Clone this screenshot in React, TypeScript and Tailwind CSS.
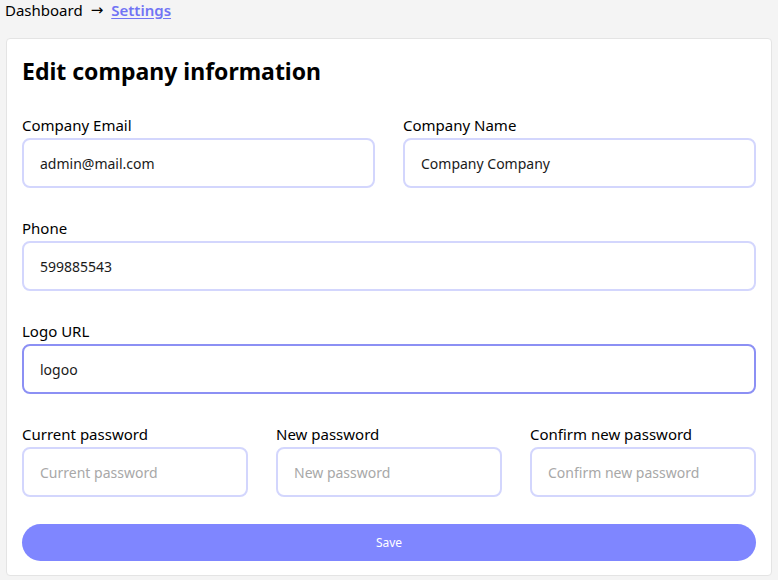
import React from "react";

const font = { fontFamily: '"Noto Sans", "Segoe UI", sans-serif' };

function Field({ label, value, placeholder, focused }: { label: string; value?: string; placeholder?: string; focused?: boolean }) {
  return (
    <div className="flex flex-col">
      <label className="text-[15px] leading-5 text-black mb-[3px]">{label}</label>
      <input
        readOnly
        defaultValue={value}
        placeholder={placeholder}
        className={
          "h-[50px] w-full rounded-lg border-2 bg-white px-4 text-[14px] text-[#1a1a1a] outline-none placeholder:text-[#a8a8a8] " +
          (focused ? "border-[#8c90f4]" : "border-[#d3d6fd]")
        }
        style={font}
      />
    </div>
  );
}

export default function App() {
  return (
    <div className="min-h-[580px] bg-[#f4f4f4] px-[6px]" style={font}>
      <div className="flex items-center h-[20px] text-[15px] leading-5 text-black -ml-[1px]">
        <span>Dashboard</span>
        <span className="mx-[8px] text-[15px]" style={{ fontFamily: '"DejaVu Sans", sans-serif' }}>→</span>
        <a className="font-semibold text-[#7174f4] underline underline-offset-2">Settings</a>
      </div>
      <div className="mt-[18px] rounded border border-[#e4e4e4] bg-white px-[15px] pt-4 pb-[14px]">
        <h1 className="text-[23px] leading-8 font-bold text-black">Edit company information</h1>
        <div className="mt-[28px] flex flex-col gap-[30px]">
          <div className="grid grid-cols-2 gap-7">
            <Field label="Company Email" value="admin@mail.com" />
            <Field label="Company Name" value="Company Company" />
          </div>
          <Field label="Phone" value="599885543" />
          <Field label="Logo URL" value="logoo" focused />
          <div className="grid grid-cols-3 gap-7">
            <Field label="Current password" placeholder="Current password" />
            <Field label="New password" placeholder="New password" />
            <Field label="Confirm new password" placeholder="Confirm new password" />
          </div>
          <button className="-mt-[3px] h-[37px] w-full rounded-full bg-[#7f86ff] text-[12px] text-white">Save</button>
        </div>
      </div>
    </div>
  );
}
